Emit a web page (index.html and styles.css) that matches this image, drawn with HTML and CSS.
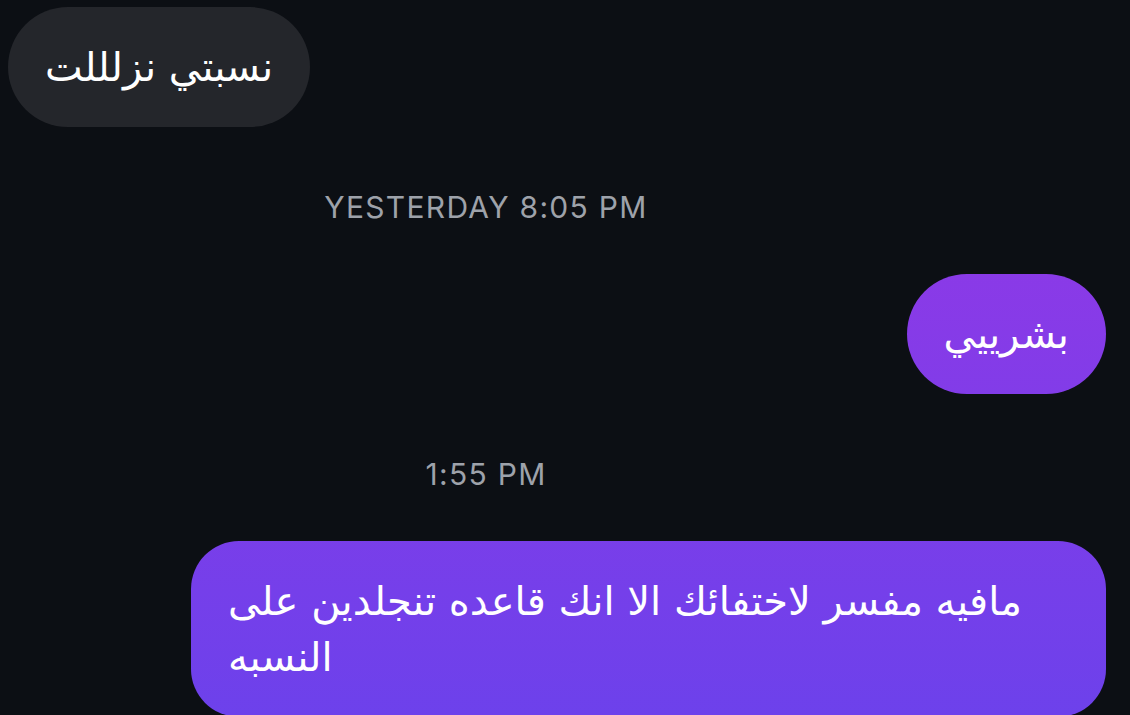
FILE: index.html
```html
<html>
    <head>
        <title>Chat</title>
        <link rel="stylesheet" href="styles.css">
    </head>
    <body>
        <div class="thread">
            <div class="row them">
                <div class="bubble grey" dir="rtl">نسبتي نزلللت</div>
            </div>
            <div class="stamp">YESTERDAY 8:05 PM</div>
            <div class="row me">
                <div class="bubble purple" dir="rtl">بشرييي</div>
            </div>
            <div class="stamp">1:55 PM</div>
            <div class="row me">
                <div class="bubble purple long" dir="rtl">مافيه مفسر لاختفائك الا انك قاعده تنجلدين على النسبه</div>
            </div>
        </div>
    </body>
</html>
```

FILE: styles.css
```css
body {
    margin: 0;
    background: #0c0f14;
    overflow: hidden;
}
.thread {
    padding: 7px 24px 0 8px;
}
.row {
    display: flex;
}
.row.me {
    justify-content: flex-end;
}
/* message bubbles */
.bubble {
    font-family: "DejaVu Sans", sans-serif;
    font-size: 40px;
    line-height: 56px;
    color: #ffffff;
    padding: 32px 37px;
    border-radius: 60px;
    text-align: left;
}
.bubble.grey {
    background: #24262b;
}
/* the purple gradient runs over the whole screen, so each bubble shows its own slice */
.bubble.purple {
    background: linear-gradient(180deg, #9a36e3 0px, #8a3ae7 270px, #6d41eb 715px) fixed;
}
.bubble.long {
    max-width: 841px;
    border-radius: 48px;
}
/* time separators */
.stamp {
    font-family: Inter, "Liberation Sans", sans-serif;
    font-size: 30px;
    letter-spacing: 1.3px;
    color: #9ea2aa;
    text-align: center;
    padding-right: 142px;
    height: 40px;
    line-height: 40px;
    margin: 60px 0 47px;
}
```
